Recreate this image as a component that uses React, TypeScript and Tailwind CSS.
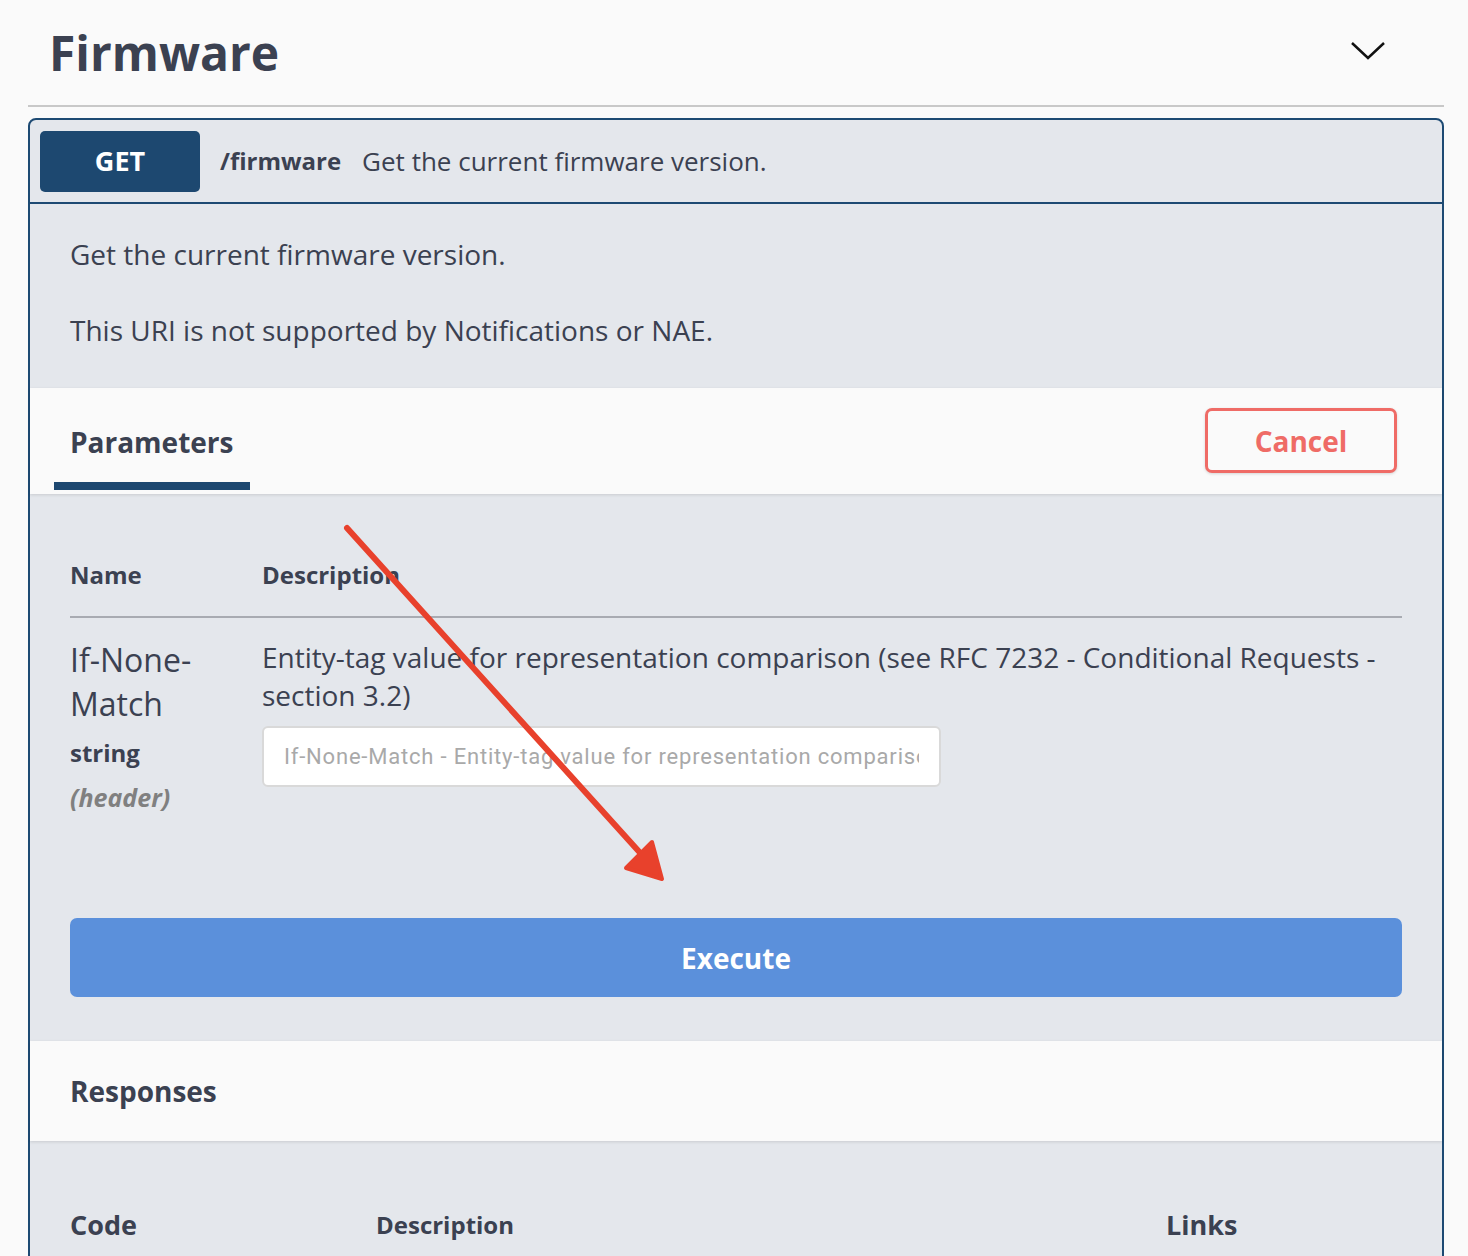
import { JSX } from 'react';

function RedArrow(): JSX.Element {
	return (
		<svg className="absolute left-0 top-0 pointer-events-none" width="1468" height="1256" viewBox="0 0 1468 1256">
			<path d="M347 528 L652 866" stroke="#e8412c" strokeWidth="6" strokeLinecap="round" fill="none" />
			<path d="M626 868 L652 842 L662 879 Z" fill="#e8412c" stroke="#e8412c" strokeWidth="4" strokeLinejoin="round" />
		</svg>
	);
}

export default function App(): JSX.Element {
	return (
		<div className="relative min-h-screen bg-[#fafafa] font-['Open_Sans',sans-serif] text-[#3b4151] overflow-hidden">
			<div className="pl-[28px] pr-[24px]">
				<div className="flex items-center justify-between h-[107px] border-b-2 border-[#c8c8c8] pl-[21px] pr-[58px]">
					<h1 className="text-[48px] font-bold leading-none">Firmware</h1>
					<svg width="36" height="20" viewBox="0 0 36 20" className="-mt-[4px]">
						<path d="M2 2 L18 17 L34 2" stroke="#111" strokeWidth="2.5" fill="none" />
					</svg>
				</div>

				<div className="mt-[11px] border-2 border-[#1d4a73] rounded-t-[8px] bg-[#e4e7ec]">
					{/* summary */}
					<div className="flex items-center h-[84px] px-[10px] border-b-2 border-[#1d4a73]">
						<div className="w-[160px] h-[61px] rounded-[5px] bg-[#1d4870] flex items-center justify-center text-white text-[27px] font-bold">
							GET
						</div>
						<span className="ml-[20px] text-[24px] font-bold">/firmware</span>
						<span className="ml-[21px] text-[26px]">Get the current firmware version.</span>
					</div>

					{/* description */}
					<div className="px-[40px] pt-[31px] h-[184px] text-[28px] leading-[38px]">
						<p>Get the current firmware version.</p>
						<p className="mt-[38px]">This URI is not supported by Notifications or NAE.</p>
					</div>

					{/* parameters header */}
					<div className="flex items-start justify-between h-[106px] bg-[#fafafa] shadow-[0_1px_3px_rgba(0,0,0,0.12)] pl-[24px] pr-[45px]">
						<div className="flex flex-col">
							<span className="px-[16px] pt-[36px] text-[28px] font-bold leading-[36px]">Parameters</span>
							<div className="mt-[22px] h-[8px] w-[196px] bg-[#1d4870]" />
						</div>
						<button className="mt-[20px] w-[192px] h-[65px] rounded-[7px] border-[3px] border-[#ef6b66] text-[#ef6b66] text-[28px] font-bold shadow-[0_1px_3px_rgba(0,0,0,0.15)] bg-[#fafafa]">
							Cancel
						</button>
					</div>

					{/* parameters table */}
					<div className="px-[40px] pt-[63px] pb-[44px]">
						<div className="flex h-[61px] border-b-2 border-[#a8abb2] text-[24px] font-bold items-start">
							<span className="w-[192px]">Name</span>
							<span>Description</span>
						</div>
						<div className="flex pt-[20px]">
							<div className="w-[192px] flex flex-col">
								<span className="text-[32px] leading-[44px] pr-[40px]">If-None-Match</span>
								<span className="mt-[11px] text-[24px] font-bold leading-[32px]">string</span>
								<span className="mt-[12px] text-[25px] font-bold italic text-[#808080] leading-[32px]">(header)</span>
							</div>
							<div className="flex-1 flex flex-col">
								<p className="text-[28px] leading-[38px]">
									Entity-tag value for representation comparison (see RFC 7232 - Conditional Requests - section 3.2)
								</p>
								<input
									className="mt-[12px] w-[679px] h-[61px] bg-white border-2 border-[#d9d9d9] rounded-[6px] px-[20px] text-[22px] tracking-[0.8px] placeholder:text-[#a9a9a9] outline-none font-['Roboto',sans-serif]"
									placeholder="If-None-Match - Entity-tag value for representation comparison"
								/>
							</div>
						</div>
						<button className="mt-[105px] w-full h-[79px] rounded-[7px] bg-[#5b90db] text-white text-[28px] font-bold">
							Execute
						</button>
					</div>

					{/* responses */}
					<div className="h-[100px] bg-[#fafafa] shadow-[0_1px_3px_rgba(0,0,0,0.12)] flex items-center px-[40px]">
						<span className="text-[28px] font-bold">Responses</span>
					</div>
					<div className="px-[40px] pt-[64px] pb-[40px] flex items-center text-[27px] font-bold">
						<span className="w-[306px]">Code</span>
						<span className="flex-1 text-[24px]">Description</span>
						<span className="w-[236px]">Links</span>
					</div>
				</div>
			</div>
			<RedArrow />
		</div>
	);
}
